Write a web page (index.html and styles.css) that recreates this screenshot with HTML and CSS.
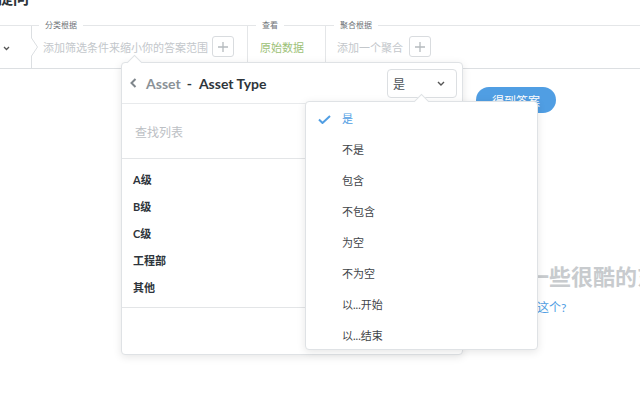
FILE: index.html
```html
<!DOCTYPE html>
<html lang="zh">
  <head>
    <meta charset="UTF-8" />
    <meta name="viewport" content="width=device-width, initial-scale=1.0" />
    <title>提问</title>
    <link rel="stylesheet" href="styles.css">
  </head>
  <body>
    <div id="app">
      <div class="page-head">
        <h1 class="page-title">提问</h1>
      </div>

      <div class="query-bar">
        <div class="qb-section qb-data">
          <svg width="7" height="5" viewBox="0 0 7 5"><path d="M1 1l2.5 2.5L6 1" fill="none" stroke="#555" stroke-width="1.3"/></svg>
        </div>
        <svg class="crumb" width="8" height="42" viewBox="0 0 8 42"><path d="M0.5 0V12L6.5 21L0.5 30V42" fill="none" stroke="#dcdfe2"/></svg>
        <div class="qb-section qb-filter">
          <span class="qb-label">分类根据</span>
          <div class="qb-row">
            <span class="qb-placeholder">添加筛选条件来缩小你的答案范围</span>
            <span class="add-btn"><svg width="10" height="10" viewBox="0 0 10 10"><path d="M5 0v10M0 5h10" stroke="#b5babe" stroke-width="1.3"/></svg></span>
          </div>
        </div>
        <div class="qb-section qb-view">
          <span class="qb-label">查看</span>
          <div class="qb-row">
            <span class="qb-view-value">原始数据</span>
          </div>
        </div>
        <div class="qb-section qb-agg">
          <span class="qb-label">聚合根据</span>
          <div class="qb-row">
            <span class="qb-placeholder">添加一个聚合</span>
            <span class="add-btn"><svg width="10" height="10" viewBox="0 0 10 10"><path d="M5 0v10M0 5h10" stroke="#b5babe" stroke-width="1.3"/></svg></span>
          </div>
        </div>
      </div>

      <div class="results">
        <div class="run-row">
          <button class="run-btn">得到答案</button>
        </div>
        <div class="empty-state">
          <p class="empty-title">我可以给你展示一些很酷的东西</p>
          <a class="empty-link" href="#">试试这个?</a>
        </div>
      </div>

      <!-- filter popover -->
      <div class="popover filter-pop">
        <div class="fp-header">
          <svg class="back-icon" width="7" height="10" viewBox="0 0 7 10"><path d="M5.5 1L1.5 5l4 4" fill="none" stroke="#7f868c" stroke-width="2"/></svg>
          <span class="fp-table">Asset</span>
          <span class="fp-dash">-</span>
          <span class="fp-field">Asset Type</span>
          <div class="op-select">
            <span>是</span>
            <svg width="8" height="5" viewBox="0 0 8 5"><path d="M1 1l3 3 3-3" fill="none" stroke="#555" stroke-width="1.4"/></svg>
          </div>
        </div>
        <div class="fp-search">查找列表</div>
        <ul class="fp-list">
          <li>A级</li>
          <li>B级</li>
          <li>C级</li>
          <li>工程部</li>
          <li>其他</li>
        </ul>
        <div class="fp-footer"></div>
      </div>

      <!-- operator menu -->
      <div class="popover op-menu">
        <ul>
          <li class="selected">
            <svg class="check" width="13" height="9" viewBox="0 0 13 9"><path d="M1 4.5l3.5 3.5L12 1" fill="none" stroke="#509ee3" stroke-width="2"/></svg>
            是
          </li>
          <li>不是</li>
          <li>包含</li>
          <li>不包含</li>
          <li>为空</li>
          <li>不为空</li>
          <li>以...开始</li>
          <li>以...结束</li>
        </ul>
      </div>
    </div>
  </body>
</html>
```

FILE: styles.css
```css
* {
  box-sizing: border-box;
  margin: 0;
  padding: 0;
}
body {
  font-family: Lato, "Noto Sans CJK SC", sans-serif;
  color: #2e353b;
  background: #fff;
  width: 640px;
  height: 398px;
  overflow: hidden;
}
#app {
  position: relative;
  width: 640px;
  height: 398px;
  overflow: hidden;
}

.page-head {
  height: 25px;
  overflow: hidden;
}
.page-title {
  font-size: 16px;
  line-height: 18px;
  font-weight: 700;
  margin-top: -11px;
  margin-left: -3px;
}

/* query builder bar */
.query-bar {
  display: flex;
  height: 44px;
  border-top: 1px solid #e4e6e8;
  border-bottom: 1px solid #dcdfe2;
}
.qb-section {
  height: 42px;
}
.qb-data {
  width: 31px;
  display: flex;
  align-items: center;
  padding: 2px 0 0 3px;
}
.crumb {
  display: block;
  flex: none;
}
.qb-filter {
  width: 208px;
}
.qb-view {
  width: 78px;
  border-left: 1px solid #e4e6e8;
}
.qb-agg {
  flex: 1;
  border-left: 1px solid #e4e6e8;
}
.qb-label {
  display: block;
  width: max-content;
  margin: -7px 0 0 8px;
  padding: 0 6px;
  background: #fff;
  font-size: 8px;
  line-height: 12px;
  color: #6f7479;
}
.qb-filter .qb-label {
  margin-left: 0;
}
.qb-row {
  display: flex;
  align-items: center;
  gap: 6px;
  height: 21px;
  margin-top: 5px;
  padding-left: 11px;
  font-size: 11px;
}
.qb-filter .qb-row {
  padding-left: 4px;
  gap: 4px;
}
.qb-view .qb-row {
  padding-left: 12px;
}
.qb-placeholder {
  color: #c3c7cb;
}
.qb-view-value {
  color: #9cc177;
}
.add-btn {
  display: flex;
  align-items: center;
  justify-content: center;
  width: 22px;
  height: 21px;
  border: 1px solid #d9dcdf;
  border-radius: 3px;
}

/* results area */
.run-row {
  display: flex;
  justify-content: flex-end;
  padding: 18px 84px 0 0;
}
.run-btn {
  width: 80px;
  height: 26px;
  border: none;
  border-radius: 13px;
  background: #509ee3;
  color: #fff;
  font-family: inherit;
  font-size: 12px;
}
.empty-state {
  margin-top: 149px;
  padding-left: 373px;
  white-space: nowrap;
}
.empty-title {
  font-size: 22px;
  line-height: 30px;
  font-weight: 700;
  color: #c8cbce;
}
.empty-link {
  display: block;
  margin-top: 8px;
  margin-left: 140px;
  font-size: 12px;
  line-height: 16px;
  color: #509ee3;
  text-decoration: none;
}

/* popovers */
.popover {
  position: absolute;
  background: #fff;
  border: 1px solid #dfe2e5;
  border-radius: 4px;
  box-shadow: 0 2px 8px rgba(0, 0, 0, 0.1);
}
.popover::before {
  content: "";
  position: absolute;
  top: -6px;
  width: 10px;
  height: 10px;
  background: #fff;
  border-top: 1px solid #dfe2e5;
  border-left: 1px solid #dfe2e5;
  transform: rotate(45deg);
}
.filter-pop {
  left: 121px;
  top: 62px;
  width: 342px;
  height: 293px;
}
.filter-pop::before {
  left: 7px;
}
.fp-header {
  display: flex;
  align-items: center;
  height: 41px;
  padding: 0 5px 0 8px;
  border-bottom: 1px solid #e8eaec;
  font-size: 14px;
  font-weight: 700;
}
.back-icon {
  margin-right: 9px;
}
.fp-table {
  color: #8a9197;
}
.fp-dash {
  margin: 0 7px 0 6px;
}
.op-select {
  display: flex;
  align-items: center;
  justify-content: space-between;
  width: 70px;
  height: 29px;
  margin-left: auto;
  padding: 0 11px 0 5px;
  border: 1px solid #dcdfe2;
  border-radius: 4px;
  font-size: 12px;
  font-weight: 400;
  color: #4c5257;
}
.fp-search {
  display: flex;
  align-items: center;
  height: 55px;
  padding-left: 13px;
  border-bottom: 1px solid #e3e5e7;
  font-size: 12px;
  color: #bcc0c4;
}
.fp-list {
  list-style: none;
  height: 149px;
  padding: 7px 0 0 11px;
  border-bottom: 1px solid #e3e5e7;
}
.fp-list li {
  font-size: 11px;
  line-height: 27px;
  font-weight: 700;
}

.op-menu {
  left: 305px;
  top: 101px;
  width: 233px;
  height: 249px;
}
.op-menu::before {
  left: 110px;
}
.op-menu ul {
  list-style: none;
  padding-top: 1px;
}
.op-menu li {
  position: relative;
  height: 31px;
  line-height: 31px;
  padding-left: 36px;
  font-size: 11px;
  color: #3f4549;
}
.op-menu li.selected {
  color: #509ee3;
}
.check {
  position: absolute;
  left: 12px;
  top: 12px;
}
```
